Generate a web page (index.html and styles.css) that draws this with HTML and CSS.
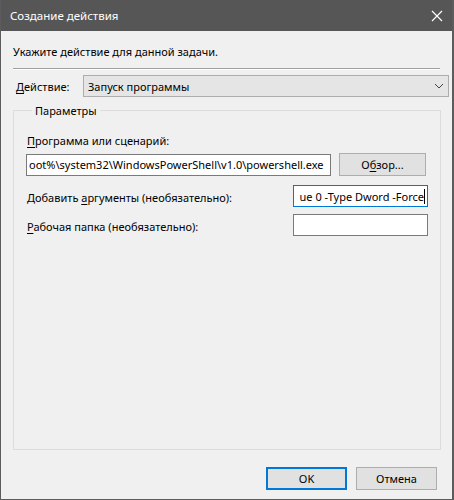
FILE: index.html
```html
<!DOCTYPE html>
<html>

<head>
    <link rel="stylesheet" href="styles.css">
</head>

<body>

    <div class="window">
        <div class="titlebar">
            <span class="title">Создание действия</span>
            <svg class="close" width="12" height="12" viewBox="0 0 12 12">
                <path d="M1 1 L11 11 M11 1 L1 11" stroke="#fff" stroke-width="1.2" fill="none"/>
            </svg>
        </div>

        <div class="content">
            <p class="hint">Укажите действие для данной задачи.</p>
            <div class="separator"></div>

            <div class="action-row">
                <span class="label"><u>Д</u>ействие:</span>
                <div class="combo">
                    <span>Запуск программы</span>
                    <svg width="10" height="6" viewBox="0 0 10 6">
                        <path d="M1 1 L5 5 L9 1" stroke="#444" stroke-width="1" fill="none"/>
                    </svg>
                </div>
            </div>

            <fieldset class="group">
                <legend>Параметры</legend>

                <div class="label top-label"><u>П</u>рограмма или сценарий:</div>
                <div class="program-row">
                    <div class="field program">oot%\system32\WindowsPowerShell\v1.0\powershell.exe</div>
                    <button class="btn browse">О<u>б</u>зор...</button>
                </div>

                <div class="field-row">
                    <span class="label">Добавить <u>а</u>ргументы (необязательно):</span>
                    <div class="field small focused"><span>ue 0 -Type Dword -Force</span><i class="caret"></i></div>
                </div>

                <div class="field-row">
                    <span class="label"><u>Р</u>абочая папка (необязательно):</span>
                    <div class="field small"></div>
                </div>
            </fieldset>

            <div class="buttons">
                <button class="btn default">OK</button>
                <button class="btn">Отмена</button>
            </div>
        </div>
    </div>

</body>

</html>
```

FILE: styles.css
```css
body {
    margin: 0;
    background-color: #f0f0f0;
    font-family: "Noto Sans", "Open Sans", sans-serif;
    font-size: 11px;
    color: #000;
}

u {
    text-decoration-thickness: 1px;
    text-underline-offset: 2px;
}

.window {
    width: 454px;
    height: 500px;
    box-sizing: border-box;
    border-left: 1px solid #5c5c5c;
    border-right: 2px solid #5c5c5c;
    border-bottom: 1px solid #5c5c5c;
    display: flex;
    flex-direction: column;
}

.titlebar {
    height: 31px;
    background-color: #565656;
    color: #fff;
    font-size: 11.5px;
    display: flex;
    align-items: center;
    justify-content: space-between;
    padding: 0 9px 0 9px;
    flex-shrink: 0;
}

.title {
    padding-bottom: 1px;
}

.content {
    flex: 1;
    padding: 0 11px 0 12px;
    display: flex;
    flex-direction: column;
}

.hint {
    margin: 13px 0 0 0;
    line-height: 16px;
}

.separator {
    margin-top: 8px;
    margin-right: 1px;
    height: 1px;
    background-color: #a0a0a0;
    border-bottom: 1px solid #fff;
}

.action-row {
    display: flex;
    align-items: center;
    margin-top: 5px;
    margin-right: -8px;
}

.action-row .label {
    width: 67px;
    padding-left: 3px;
}

.combo {
    flex: 1;
    height: 22px;
    box-sizing: border-box;
    border: 1px solid #adadad;
    background-color: #e5e5e5;
    display: flex;
    align-items: center;
    justify-content: space-between;
    padding: 0 4px 0 4px;
}

.group {
    margin: 6px 0 0 0;
    height: 347px;
    box-sizing: border-box;
    border: 1px solid #dcdcdc;
    padding: 17px 10px 0 13px;
}

.group legend {
    padding: 0 3px;
    margin-left: 5px;
}

.top-label {
    margin-top: -2px;
}

.program-row {
    display: flex;
    align-items: center;
    margin-top: 5px;
    margin-left: -1px;
}

.field {
    height: 22px;
    box-sizing: border-box;
    border: 1px solid #7a7a7a;
    background-color: #fff;
    white-space: nowrap;
    overflow: hidden;
    display: flex;
    align-items: center;
}

.program {
    width: 305px;
    padding-left: 2px;
}

.browse {
    margin-left: 8px;
    width: 87px;
}

.field-row {
    display: flex;
    align-items: center;
    justify-content: space-between;
    margin-top: 9px;
    margin-right: 2px;
}

.field-row + .field-row {
    margin-top: 7px;
}

.field-row .label {
    padding-top: 3px;
}

.small {
    width: 135px;
    justify-content: flex-end;
    padding-right: 2px;
}

.focused {
    border-color: #0078d7;
}

.caret {
    display: inline-block;
    width: 1px;
    height: 15px;
    background-color: #000;
}

.btn {
    font-family: inherit;
    font-size: 11px;
    color: #000;
    height: 23px;
    box-sizing: border-box;
    border: 1px solid #adadad;
    background-color: #e1e1e1;
    padding: 0;
}

.buttons {
    display: flex;
    justify-content: flex-end;
    gap: 9px;
    margin-top: 17px;
    margin-right: 4px;
}

.buttons .btn {
    width: 81px;
}

.default {
    border: 2px solid #0078d7;
}
```
